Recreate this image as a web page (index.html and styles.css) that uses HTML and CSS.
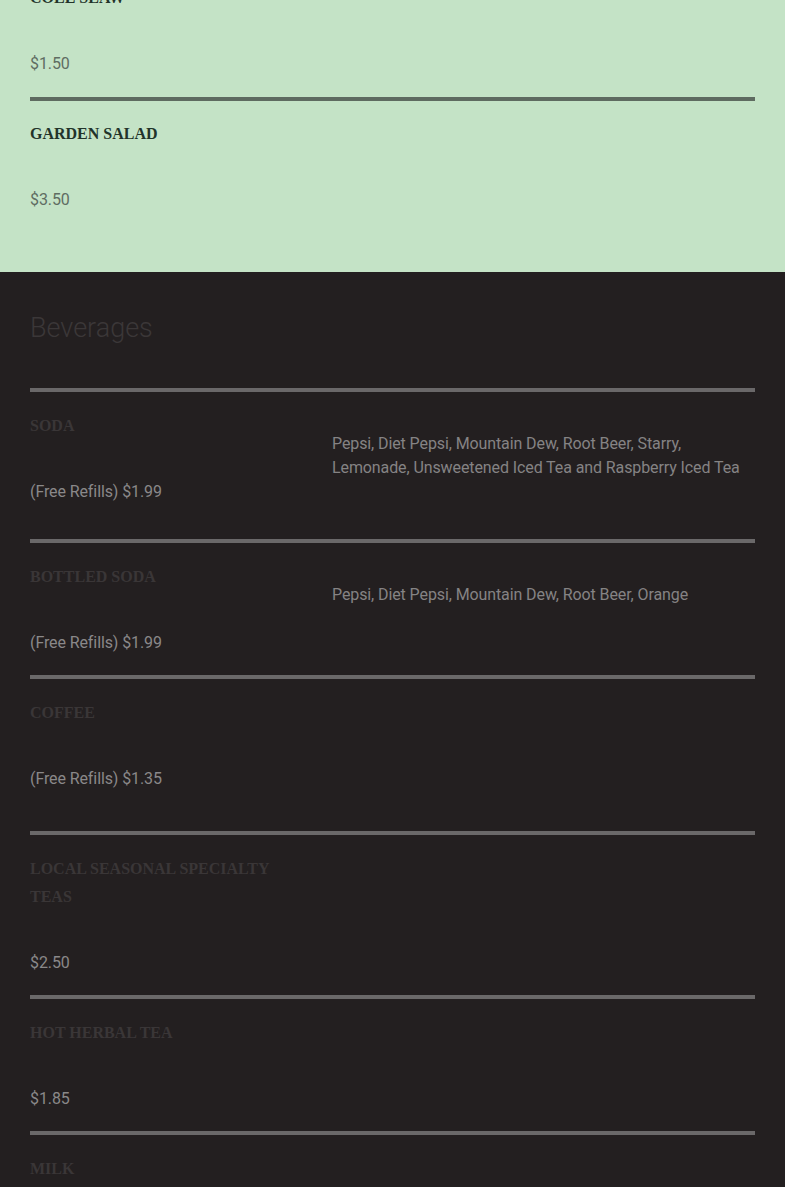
FILE: index.html
```html
<!DOCTYPE html>
<html>
<head>
<meta charset="utf-8">
<link rel="stylesheet" href="styles.css">
</head>
<body>
<div class="page">
  <section class="menu menu--light">
    <div class="item">
      <div class="item__main">
        <h3 class="item__title">COLE SLAW</h3>
        <p class="item__price">$1.50</p>
      </div>
    </div>
    <div class="item">
      <div class="item__main">
        <h3 class="item__title">GARDEN SALAD</h3>
        <p class="item__price">$3.50</p>
      </div>
    </div>
  </section>
  <section class="menu menu--dark">
    <h2 class="menu__heading">Beverages</h2>
    <div class="item">
      <div class="item__main">
        <h3 class="item__title">SODA</h3>
        <p class="item__price">(Free Refills) $1.99</p>
      </div>
      <p class="item__desc">Pepsi, Diet Pepsi, Mountain Dew, Root Beer, Starry, Lemonade, Unsweetened Iced Tea and Raspberry Iced Tea</p>
    </div>
    <div class="item">
      <div class="item__main">
        <h3 class="item__title">BOTTLED SODA</h3>
        <p class="item__price">(Free Refills) $1.99</p>
      </div>
      <p class="item__desc">Pepsi, Diet Pepsi, Mountain Dew, Root Beer, Orange</p>
    </div>
    <div class="item item--spaced">
      <div class="item__main">
        <h3 class="item__title">COFFEE</h3>
        <p class="item__price">(Free Refills) $1.35</p>
      </div>
    </div>
    <div class="item">
      <div class="item__main">
        <h3 class="item__title">LOCAL SEASONAL SPECIALTY TEAS</h3>
        <p class="item__price">$2.50</p>
      </div>
    </div>
    <div class="item">
      <div class="item__main">
        <h3 class="item__title">HOT HERBAL TEA</h3>
        <p class="item__price">$1.85</p>
      </div>
    </div>
    <div class="item">
      <div class="item__main">
        <h3 class="item__title">MILK</h3>
        <p class="item__price">$1.50</p>
      </div>
    </div>
  </section>
</div>
</body>
</html>
```
FILE: styles.css
```css
html, body {
  margin: 0;
  padding: 0;
  background: #231f20;
}

.page {
  margin-top: -39px;
}

.menu {
  padding: 0 30px 40px;
}

.menu--light {
  background: #c4e3c6;
  padding-bottom: 39px;
}

.menu--dark {
  background: #231f20;
  padding-top: 40px;
}

.menu__heading {
  margin: 0 0 44px;
  font-family: Roboto, "Liberation Sans", sans-serif;
  font-weight: 300;
  font-size: 27px;
  line-height: 32px;
  color: #3b3738;
}

.item {
  display: grid;
  grid-template-columns: 302px 1fr;
  border-top: 4px solid #5e6b60;
  padding: 19px 0 21px;
}

.menu--dark .item {
  border-top-color: #6a6869;
  padding: 20px 0;
}

.menu--dark .item--spaced {
  padding-bottom: 40px;
}

.item__main {
  padding-right: 30px;
}

.item__title {
  margin: 0;
  font-family: "Liberation Serif", "Times New Roman", serif;
  font-weight: bold;
  font-size: 16px;
  line-height: 28px;
  color: #22332a;
}

.menu--dark .item__title {
  color: #3a3637;
}

.item__price {
  margin: 40px 0 0;
  font-family: Roboto, "Liberation Sans", sans-serif;
  font-size: 16px;
  line-height: 24px;
  letter-spacing: -0.1px;
  color: #5f6d62;
}

.menu--dark .item__price {
  color: #8a8889;
}

.item__desc {
  margin: 20px 0 39px;
  font-family: Roboto, "Liberation Sans", sans-serif;
  font-size: 16px;
  line-height: 24px;
  letter-spacing: -0.1px;
  color: #858384;
}
```
